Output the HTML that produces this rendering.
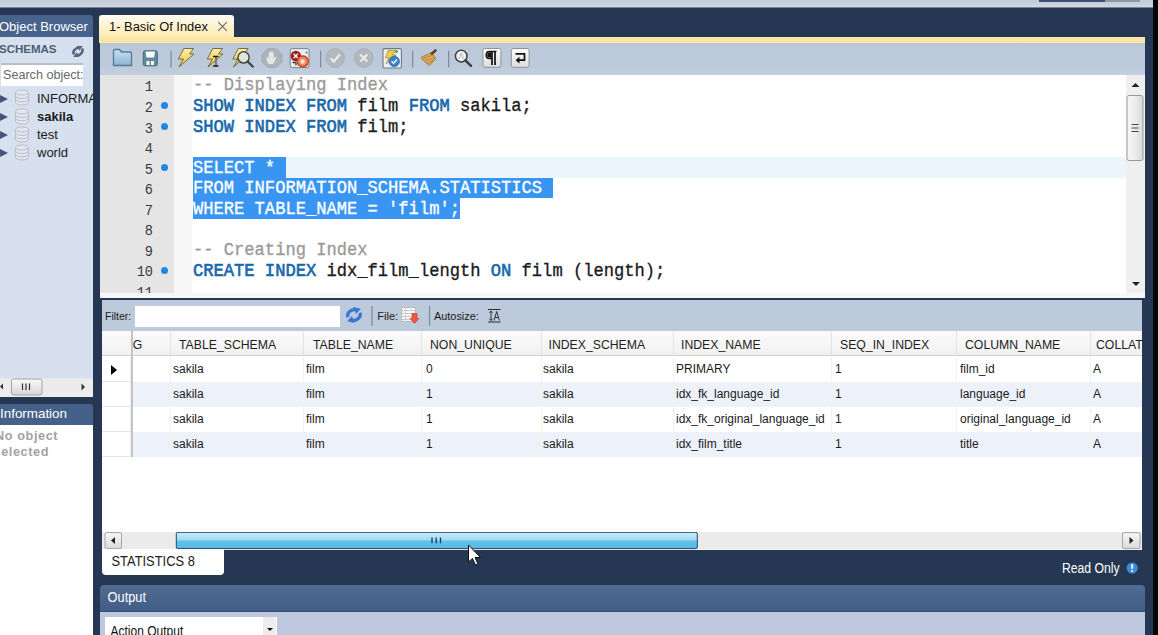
<!DOCTYPE html>
<html><head><meta charset="utf-8">
<style>
*{margin:0;padding:0;box-sizing:border-box}
html,body{width:1158px;height:635px;overflow:hidden}
body{position:relative;background:#253752;font-family:"Liberation Sans",sans-serif;color:#000}
.a{position:absolute}
.mono{font-family:"Liberation Mono",monospace}
.t{position:absolute;white-space:nowrap}
#top{left:0;top:0;width:1153px;height:8px;background:linear-gradient(#c2cbd8,#c8d0dc 60%,#d3dae5);border-bottom:1px solid #75839a}
#blk{left:1153px;top:0;width:5px;height:635px;background:#050608}
#obh{left:0;top:15px;width:93px;height:22px;background:#47638c;border-radius:0 3px 0 0;overflow:hidden}
#obb{left:0;top:37px;width:93px;height:341px;background:#d6e0ee;overflow:hidden}
#obsb{left:0;top:377.6px;width:93px;height:19px;background:#ececec;border-top:1px solid #e2e6ee}
#infh{left:0;top:404px;width:93px;height:21px;background:#45618a;border-radius:0 3px 0 0;overflow:hidden}
#infb{left:0;top:425px;width:93px;height:210px;background:#fff;overflow:hidden}
#tab{left:99px;top:15px;width:135px;height:23px;border-radius:3px 3px 0 0;background:linear-gradient(#fefcf4,#fdf0c8 60%,#fde9b0)}
#ystrip{left:99px;top:37px;width:1046px;height:6px;background:#fde5a6}
#tbar{left:100px;top:43px;width:1045px;height:32px;background:linear-gradient(#bac8da,#bccadb 75%,#c4cfdf)}
#ed{left:100px;top:75px;width:1045px;height:222.5px;background:#f7f7f7;overflow:hidden}
#edc{left:0;top:0;width:1026px;height:218px;background:#fff;overflow:hidden}
#gut{left:0;top:0;width:73.5px;height:218px;background:#e5e5e5}
#fold{left:73.5px;top:0;width:18px;height:218px;background:#f7f7f7}
.ln{position:absolute;left:0;width:52px;text-align:right;font-size:13.6px;color:#383838;line-height:20.45px;transform:scaleY(1.1);transform-origin:0 55%}
.dot{position:absolute;left:61px;width:7px;height:7px;border-radius:50%;background:#1e88e5}
.code{position:absolute;left:93px;font-size:17.13px;white-space:pre;color:#1a1a1a;line-height:20.45px;height:20.45px;transform:scaleY(1.1);transform-origin:0 72%;-webkit-text-stroke:0.3px currentColor}
.w{color:#fff}
.kw{color:#1868ac;-webkit-text-stroke:0.6px #1868ac}
.cm{color:#9a9a9a}
#vsb{left:1025.5px;top:0;width:19px;height:218px;background:#efefef}
#ftb{left:102px;top:300px;width:1040px;height:31px;background:#bccadb}
#grid{left:102px;top:331px;width:1040px;height:201px;background:#fff;overflow:hidden;font-size:12px}
#hsb{left:102px;top:532px;width:1040px;height:17.5px;background:#ebebeb;border-bottom:1px solid #f4f4f4}
#stat{left:102px;top:549px;width:122px;height:26px;background:#fff;border-radius:0 0 4px 4px}
#outh{left:100px;top:585px;width:1045px;height:27px;background:linear-gradient(#516b92,#46618a 70%,#425c84);border-radius:4px 4px 0 0;border-bottom:1px solid #3a5276}
#outb{left:100px;top:612px;width:1045px;height:23px;background:#bdc8df}
#dd{left:105px;top:617px;width:172px;height:20px;background:#fff}
</style></head><body>
<div id="top" class="a"></div>
<div class="a" style="left:1039px;top:0;width:66px;height:1.5px;background:#3a5070"></div><div class="a" style="left:1105px;top:0;width:35px;height:1.5px;background:#8c98a8"></div>
<div id="blk" class="a"></div>
<div id="obh" class="a"><div class="t" style="left:-1px;top:4.50px;font-size:13px;line-height:13px;color:#fff;font-weight:normal;">Object Browser</div></div>
<div id="obb" class="a"><div class="t" style="left:-1px;top:6.87px;font-size:11.5px;line-height:11.5px;color:#4d5d74;font-weight:bold;">SCHEMAS</div>
<svg class="a" style="left:70px;top:9px" width="16" height="12" viewBox="70 46 16 12"><g transform="rotate(-30 78 51.5)"><path d="M73.2 52 A5 3.6 0 0 1 81 48.6" stroke="#56667c" stroke-width="2.6" fill="none"/><path d="M79.5 46 L84.8 49.2 L79.6 51.6 Z" fill="#56667c"/><path d="M82.8 51 A5 3.6 0 0 1 75 54.4" stroke="#56667c" stroke-width="2.6" fill="none"/><path d="M76.5 57 L71.2 53.8 L76.4 51.4 Z" fill="#56667c"/></g></svg>
<div class="a" style="left:1px;top:26px;width:82px;height:23px;background:#fff;border-top:2px solid #b7bec8"></div>
<div class="t" style="left:3px;top:31.53px;font-size:12.6px;line-height:12.6px;color:#686868;font-weight:normal;transform:scaleY(1.05);transform-origin:0 84.65%;width:79.5px;overflow:hidden">Search object:</div>
<div class="a" style="left:-0.5px;top:57.6px;width:0;height:0;border-left:8px solid #44547a;border-top:4.7px solid transparent;border-bottom:4.7px solid transparent"></div>
<svg class="a" style="left:14px;top:52.3px" width="16" height="17" viewBox="0 0 16 17"><path d="M1.5 3.5 V13.5 A6.5 2.5 0 0 0 14.5 13.5 V3.5 A6.5 2.5 0 0 0 1.5 3.5 Z" fill="#e2e7ef"/><g fill="none" stroke="#b9bfca" stroke-width="1"><ellipse cx="8" cy="3.5" rx="6.5" ry="2.5"/><path d="M1.5 3.5 V13.5 A6.5 2.5 0 0 0 14.5 13.5 V3.5"/><path d="M1.5 7 A6.5 2.5 0 0 0 14.5 7"/><path d="M1.5 10.3 A6.5 2.5 0 0 0 14.5 10.3"/></g></svg>
<div class="t" style="left:37px;top:54.50px;font-size:13px;line-height:13px;color:#1a1a1a;font-weight:normal;">INFORMATION_SCHEMA</div>
<div class="a" style="left:-0.5px;top:75.8px;width:0;height:0;border-left:8px solid #44547a;border-top:4.7px solid transparent;border-bottom:4.7px solid transparent"></div>
<svg class="a" style="left:14px;top:70.5px" width="16" height="17" viewBox="0 0 16 17"><path d="M1.5 3.5 V13.5 A6.5 2.5 0 0 0 14.5 13.5 V3.5 A6.5 2.5 0 0 0 1.5 3.5 Z" fill="#e2e7ef"/><g fill="none" stroke="#b9bfca" stroke-width="1"><ellipse cx="8" cy="3.5" rx="6.5" ry="2.5"/><path d="M1.5 3.5 V13.5 A6.5 2.5 0 0 0 14.5 13.5 V3.5"/><path d="M1.5 7 A6.5 2.5 0 0 0 14.5 7"/><path d="M1.5 10.3 A6.5 2.5 0 0 0 14.5 10.3"/></g></svg>
<div class="t" style="left:37px;top:72.70px;font-size:13px;line-height:13px;color:#1a1a1a;font-weight:bold;">sakila</div>
<div class="a" style="left:-0.5px;top:94.0px;width:0;height:0;border-left:8px solid #44547a;border-top:4.7px solid transparent;border-bottom:4.7px solid transparent"></div>
<svg class="a" style="left:14px;top:88.7px" width="16" height="17" viewBox="0 0 16 17"><path d="M1.5 3.5 V13.5 A6.5 2.5 0 0 0 14.5 13.5 V3.5 A6.5 2.5 0 0 0 1.5 3.5 Z" fill="#e2e7ef"/><g fill="none" stroke="#b9bfca" stroke-width="1"><ellipse cx="8" cy="3.5" rx="6.5" ry="2.5"/><path d="M1.5 3.5 V13.5 A6.5 2.5 0 0 0 14.5 13.5 V3.5"/><path d="M1.5 7 A6.5 2.5 0 0 0 14.5 7"/><path d="M1.5 10.3 A6.5 2.5 0 0 0 14.5 10.3"/></g></svg>
<div class="t" style="left:37px;top:90.90px;font-size:13px;line-height:13px;color:#1a1a1a;font-weight:normal;">test</div>
<div class="a" style="left:-0.5px;top:112.2px;width:0;height:0;border-left:8px solid #44547a;border-top:4.7px solid transparent;border-bottom:4.7px solid transparent"></div>
<svg class="a" style="left:14px;top:106.9px" width="16" height="17" viewBox="0 0 16 17"><path d="M1.5 3.5 V13.5 A6.5 2.5 0 0 0 14.5 13.5 V3.5 A6.5 2.5 0 0 0 1.5 3.5 Z" fill="#e2e7ef"/><g fill="none" stroke="#b9bfca" stroke-width="1"><ellipse cx="8" cy="3.5" rx="6.5" ry="2.5"/><path d="M1.5 3.5 V13.5 A6.5 2.5 0 0 0 14.5 13.5 V3.5"/><path d="M1.5 7 A6.5 2.5 0 0 0 14.5 7"/><path d="M1.5 10.3 A6.5 2.5 0 0 0 14.5 10.3"/></g></svg>
<div class="t" style="left:37px;top:109.10px;font-size:13px;line-height:13px;color:#1a1a1a;font-weight:normal;">world</div></div>
<div id="obsb" class="a"></div>
<svg class="a" style="left:0;top:377px" width="93" height="20" viewBox="0 377 93 20"><defs><linearGradient id="lth" x1="0" y1="0" x2="0" y2="1"><stop offset="0" stop-color="#fafafa"/><stop offset="1" stop-color="#d6d6d6"/></linearGradient></defs><path d="M3 383.5 L0 386.5 L3 389.5 Z" fill="#333"/><rect x="11.5" y="379" width="30.5" height="16" rx="2" fill="url(#lth)" stroke="#a3a3a3" stroke-width="1"/><path d="M22.5 383.5 V390 M26 383.5 V390 M29.5 383.5 V390" stroke="#333" stroke-width="1.2"/><path d="M81.5 383.5 L85 387 L81.5 390.5 Z" fill="#333"/></svg>
<div id="infh" class="a"><div class="t" style="left:0px;top:3.46px;font-size:13.4px;line-height:13.4px;color:#fff;font-weight:normal;">Information</div></div>
<div id="infb" class="a"><div class="t" style="left:-5px;top:5.25px;font-size:12.7px;line-height:12.7px;color:#a2a2a8;font-weight:bold;transform:scaleY(1.06);transform-origin:0 84.65%;letter-spacing:0.6px">No object</div><div class="t" style="left:-6.5px;top:20.75px;font-size:12.7px;line-height:12.7px;color:#a2a2a8;font-weight:bold;transform:scaleY(1.06);transform-origin:0 84.65%;letter-spacing:0.6px">selected</div></div>
<div id="tab" class="a"><div class="t" style="left:10px;top:6.08px;font-size:12.9px;line-height:12.9px;color:#111;font-weight:normal;transform:scaleY(1.06);transform-origin:0 84.65%;">1- Basic Of Index</div></div>
<svg class="a" style="left:217px;top:21px" width="11" height="11" viewBox="0 0 11 11"><path d="M1.2 1.2 L9.8 9.8 M9.8 1.2 L1.2 9.8" stroke="#6a6a6a" stroke-width="1.2"/></svg>
<div id="ystrip" class="a"></div>
<div id="tbar" class="a"></div>
<svg class="a" style="left:100px;top:43px" width="1045" height="32" viewBox="100 43 1045 32"><defs><linearGradient id="fg" x1="0" y1="0" x2="0" y2="1"><stop offset="0" stop-color="#c4e2f4"/><stop offset="1" stop-color="#8db4d2"/></linearGradient><linearGradient id="yg" x1="0" y1="0" x2="0" y2="1"><stop offset="0" stop-color="#fbeeb0"/><stop offset="1" stop-color="#e8c33c"/></linearGradient><linearGradient id="bg2" x1="0" y1="0" x2="0" y2="1"><stop offset="0" stop-color="#fdfdfd"/><stop offset="1" stop-color="#dcdcdc"/></linearGradient></defs><path d="M113.5 65.5 V50.5 Q113.5 49.5 114.5 49.5 H119.5 L121.5 52 H130.5 Q131.5 52 131.5 53 V65.5 Z" fill="url(#fg)" stroke="#587a92" stroke-width="1.3"/><rect x="143.3" y="50.8" width="14" height="15" rx="1.5" fill="#5f8aa0" stroke="#466b80" stroke-width="1"/><path d="M145.5 51.5 H155 L154 57.5 H146.5 Z" fill="#fff"/><rect x="146.5" y="61" width="3" height="4" fill="#fff"/><rect x="151" y="61" width="3" height="4" fill="#fff"/><rect x="170.4" y="50.7" width="1.3" height="16.8" fill="#7f8ea3"/><rect x="320.0" y="50.7" width="1.3" height="16.8" fill="#7f8ea3"/><rect x="412.0" y="50.7" width="1.3" height="16.8" fill="#7f8ea3"/><rect x="448.0" y="50.7" width="1.3" height="16.8" fill="#7f8ea3"/><path d="M183.8 48.5 H193.5 L189.5 54 H194 L179 67 L183.5 59 H178.3 Z" fill="url(#yg)" stroke="#6f6226" stroke-width="0.9" stroke-linejoin="round"/><g transform="translate(29 0)"><path d="M183.8 48.5 H193.5 L189.5 54 H194 L179 67 L183.5 59 H178.3 Z" fill="url(#yg)" stroke="#6f6226" stroke-width="0.9" stroke-linejoin="round"/></g><path d="M213 56.5 H218.5 M215.8 56.5 V66 M213 66 H218.5" stroke="#222" stroke-width="1.6" fill="none"/><path d="M215.8 57.5 V65" stroke="#eee" stroke-width="0.6"/><g transform="translate(54.5 0)"><path d="M183.8 48.5 H193.5 L189.5 54 H194 L179 67 L183.5 59 H178.3 Z" fill="url(#yg)" stroke="#6f6226" stroke-width="0.9" stroke-linejoin="round"/></g><circle cx="243.6" cy="57.4" r="5.6" fill="#dfe6dc" stroke="#4a4a44" stroke-width="1.5"/><path d="M247.6 61.5 L252.8 66.5" stroke="#3c4a44" stroke-width="2.4" stroke-linecap="round"/><path d="M268 48.5 H276 L282 54.5 V62 L276 67.5 H268 L262 62 V54.5 Z" fill="#aeb3ba" stroke="#9ea3aa" stroke-width="0.8"/><path d="M268.5 64 Q266 60 266.5 57 L267.5 56.8 L268.8 59 V52.5 H270 V57 V51.5 H271.3 V57 V51.8 H272.6 V57 V52.8 H273.8 V58.5 L275.5 56.5 L276.5 57.3 Q274.5 62 273 64 Z" fill="#e4e6ea"/><rect x="290.2" y="48.6" width="18.8" height="19" rx="2" fill="#e9ebee" stroke="#7d8590" stroke-width="1"/><circle cx="295.8" cy="56" r="5.2" fill="#9a1c22"/><path d="M293.6 53.8 L298 58.2 M298 53.8 L293.6 58.2" stroke="#fff" stroke-width="1.4"/><circle cx="302.8" cy="61.4" r="5.4" fill="#f4875a" stroke="#c73a16" stroke-width="1.3"/><circle cx="302.6" cy="61.6" r="2.3" fill="#fde2d0"/><path d="M292.5 62.5 H296 V65.5" stroke="#3a3a3a" stroke-width="1.3" fill="none"/><circle cx="306.5" cy="52.5" r="1" fill="#3aa04a"/><circle cx="335.2" cy="58" r="9.3" fill="#b3b8be" stroke="#a4a9b0" stroke-width="0.8"/><path d="M330.8 58.3 L333.8 61.5 L339.8 54.5" stroke="#e9ebee" stroke-width="2.4" fill="none"/><circle cx="363.8" cy="58" r="9.3" fill="#b3b8be" stroke="#a4a9b0" stroke-width="0.8"/><path d="M360.3 54.5 L367.3 61.5 M367.3 54.5 L360.3 61.5" stroke="#e9ebee" stroke-width="2.4"/><rect x="383" y="48.6" width="18.4" height="19.4" rx="1.5" fill="#eef0f2" stroke="#6f7680" stroke-width="1.1"/><path d="M388 50.5 L396 50.5 L392.5 55 L396 55 L386 64 L389 58 L385.5 58 Z" fill="#f0cd45" stroke="#8a7426" stroke-width="0.6"/><circle cx="396.5" cy="51.5" r="1.5" fill="#5aa63c"/><circle cx="394.2" cy="61.4" r="5.2" fill="#3b82d0" stroke="#2a5fa8" stroke-width="0.8"/><path d="M391.6 61.3 L393.6 63.3 L397 59.5" stroke="#fff" stroke-width="1.3" fill="none"/><path d="M421 57.5 L431.5 52.5 L436 58.5 L429.5 65.5 Q425 63 421 57.5 Z" fill="#d9a85a" stroke="#9c6e2c" stroke-width="0.8"/><path d="M423.5 58.5 L432.5 55 M425.5 61 L434 57.5 M427.5 63.5 L435 59.5" stroke="#a87930" stroke-width="0.7"/><path d="M432 53.5 L435.5 50.5" stroke="#5a4020" stroke-width="2.6" stroke-linecap="round"/><circle cx="461.2" cy="56.1" r="5.8" fill="#eef0f2" stroke="#3e3e3e" stroke-width="1.5"/><path d="M459 59 L461.2 53.2 L463.4 59" stroke="#aaa" stroke-width="0.8" fill="none"/><path d="M465.4 60.3 L471 65.8" stroke="#3b3b3b" stroke-width="2.4" stroke-linecap="round"/><rect x="482.9" y="48.5" width="18" height="18.8" rx="2" fill="url(#bg2)" stroke="#8e9399" stroke-width="1"/><path d="M495 51.5 V65 M492 51.5 V65 M496.5 51.5 H489.5 Q486.3 51.5 486.3 55 Q486.3 58.5 489.5 58.5 H492" stroke="#111" stroke-width="1.7" fill="none"/><path d="M489.5 52.3 Q487.2 52.5 487.2 55 Q487.2 57.8 491.2 57.8 V52.3 Z" fill="#111"/><rect x="511.3" y="48.5" width="17.8" height="18.8" rx="2" fill="url(#bg2)" stroke="#8e9399" stroke-width="1"/><path d="M515.5 53.8 H524.5 V60.2 H518.5" stroke="#111" stroke-width="1.7" fill="none"/><path d="M515.5 60.2 L519.5 56.8 V63.6 Z" fill="#111"/></svg>
<div id="ed" class="a"><div id="edc" class="a">
<div id="gut" class="a"></div><div id="fold" class="a"></div>
<div class="a" style="left:93px;top:82.40px;width:933px;height:20.45px;background:#eaf6fc"></div>
<div class="a" style="left:93px;top:82.40px;width:92.5px;height:20.65px;background:#3995f2"></div>
<div class="a" style="left:93px;top:102.85px;width:359.8px;height:20.65px;background:#3995f2"></div>
<div class="a" style="left:93px;top:123.30px;width:267.3px;height:20.65px;background:#3995f2"></div>
<div class="ln mono" style="top:3.39px;left:1px">1</div>
<div class="code mono" style="top:1.49px"><span class="cm">-- Displaying Index</span></div>
<div class="ln mono" style="top:23.95px;left:1px">2</div>
<div class="dot" style="top:27.05px"></div>
<div class="code mono" style="top:22.05px"><span class="kw">SHOW INDEX FROM</span> film <span class="kw">FROM</span> sakila;</div>
<div class="ln mono" style="top:44.51px;left:1px">3</div>
<div class="dot" style="top:47.61px"></div>
<div class="code mono" style="top:42.61px"><span class="kw">SHOW INDEX FROM</span> film;</div>
<div class="ln mono" style="top:65.07px;left:1px">4</div>
<div class="ln mono" style="top:85.63px;left:1px">5</div>
<div class="dot" style="top:88.73px"></div>
<div class="code mono" style="top:83.73px"><span class="w">SELECT *</span></div>
<div class="ln mono" style="top:106.19px;left:1px">6</div>
<div class="code mono" style="top:104.29px"><span class="w">FROM INFORMATION_SCHEMA.STATISTICS</span></div>
<div class="ln mono" style="top:126.75px;left:1px">7</div>
<div class="code mono" style="top:124.85px"><span class="w">WHERE TABLE_NAME = 'film';</span></div>
<div class="ln mono" style="top:147.31px;left:1px">8</div>
<div class="ln mono" style="top:167.87px;left:1px">9</div>
<div class="code mono" style="top:165.97px"><span class="cm">-- Creating Index</span></div>
<div class="ln mono" style="top:188.43px;left:1px">10</div>
<div class="dot" style="top:191.53px"></div>
<div class="code mono" style="top:186.53px"><span class="kw">CREATE INDEX</span> idx_film_length <span class="kw">ON</span> film (length);</div>
<div class="ln mono" style="top:208.99px;left:1px">11</div>
</div>
<div id="vsb" class="a"></div>
<svg class="a" style="left:1025px;top:0" width="20" height="222" viewBox="1125 75 20 222"><defs><linearGradient id="vth" x1="0" y1="0" x2="1" y2="0"><stop offset="0" stop-color="#f6f6f6"/><stop offset="0.5" stop-color="#ececec"/><stop offset="1" stop-color="#d8d8d8"/></linearGradient></defs><path d="M1131.5 87 L1135.5 83 L1139.5 87 Z" fill="#222"/><rect x="1127" y="95.5" width="16" height="65" rx="2" fill="url(#vth)" stroke="#9a9a9a" stroke-width="1"/><path d="M1131.5 124.5 H1138.5 M1131.5 128 H1138.5 M1131.5 131.5 H1138.5" stroke="#444" stroke-width="1.2"/><path d="M1132 282 L1140 282 L1136 286 Z" fill="#222"/></svg></div>
<div id="ftb" class="a"></div>
<div class="t" style="left:105px;top:311.11px;font-size:10.5px;line-height:10.5px;color:#1a1a1a;font-weight:normal;">Filter:</div>
<div class="a" style="left:135px;top:304.5px;width:204.5px;height:22.5px;background:#fff;border-top:1px solid #c8cdd4"></div>
<div class="t" style="left:377.3px;top:310.69px;font-size:11px;line-height:11px;color:#1a1a1a;font-weight:normal;">File:</div>
<div class="t" style="left:434px;top:310.77px;font-size:10.9px;line-height:10.9px;color:#1a1a1a;font-weight:normal;">Autosize:</div>
<svg class="a" style="left:340px;top:300px" width="170" height="32" viewBox="340 300 170 32"><g transform="rotate(-20 354 315)"><path d="M347.5 315 A6.5 5.2 0 0 1 358.5 311.2" stroke="#3a78d4" stroke-width="3.2" fill="none"/><path d="M356 307.2 L362.5 311.5 L356.3 314.8 Z" fill="#3a78d4"/><path d="M360.5 315 A6.5 5.2 0 0 1 349.5 318.8" stroke="#3a78d4" stroke-width="3.2" fill="none"/><path d="M352 322.8 L345.5 318.5 L351.7 315.2 Z" fill="#3a78d4"/></g><rect x="371.4" y="306" width="1.3" height="19.7" fill="#7f8ea3"/><rect x="428.9" y="306" width="1.3" height="19.7" fill="#7f8ea3"/><rect x="401.5" y="307.5" width="14" height="14" fill="#f6f6f6" stroke="#b0b0b0" stroke-width="0.8"/><path d="M401.5 310.5 H415.5" stroke="#c4c4c4" stroke-width="0.9"/><path d="M401.5 313.5 H415.5" stroke="#c4c4c4" stroke-width="0.9"/><path d="M401.5 316.5 H415.5" stroke="#c4c4c4" stroke-width="0.9"/><path d="M401.5 319.5 H415.5" stroke="#c4c4c4" stroke-width="0.9"/><path d="M405.5 307.5 V321.5" stroke="#c9c9c9" stroke-width="0.8"/><path d="M412 313.5 H417 V318.5 H419 L414.5 323.5 L410 318.5 H412 Z" fill="#ec5a44" stroke="#c23a24" stroke-width="0.6"/><path d="M488 309.5 H500.5 M488 322 H500.5" stroke="#2a2a2a" stroke-width="1"/><path d="M491 311 V320.5 M489.5 312.8 L491 311 L492.5 312.8 M489.5 318.7 L491 320.5 L492.5 318.7" stroke="#333" stroke-width="1" fill="none"/><path d="M494 320.5 L496.7 311.5 L499.4 320.5 M495 317.5 H498.4" stroke="#333" stroke-width="1" fill="none"/></svg>
<div id="grid" class="a"><div class="a" style="left:0;top:0;width:1040px;height:25px;background:linear-gradient(#fbfbfb,#f1f1f1);border-bottom:1px solid #cfcfcf"></div>
<div class="a" style="left:30px;top:26px;width:1010px;height:25px;background:#fff"></div>
<div class="a" style="left:0;top:26px;width:29px;height:25px;background:#fff;border-bottom:1px solid #e4e4e4;border-right:1px solid #ececec"></div>
<div class="a" style="left:30px;top:51px;width:1010px;height:25px;background:#edf2fa"></div>
<div class="a" style="left:0;top:51px;width:29px;height:25px;background:#fff;border-bottom:1px solid #e4e4e4;border-right:1px solid #ececec"></div>
<div class="a" style="left:30px;top:76px;width:1010px;height:25px;background:#fff"></div>
<div class="a" style="left:0;top:76px;width:29px;height:25px;background:#fff;border-bottom:1px solid #e4e4e4;border-right:1px solid #ececec"></div>
<div class="a" style="left:30px;top:101px;width:1010px;height:25px;background:#edf2fa"></div>
<div class="a" style="left:0;top:101px;width:29px;height:25px;background:#fff;border-bottom:1px solid #e4e4e4;border-right:1px solid #ececec"></div>
<div class="a" style="left:29px;top:0;width:2px;height:126px;background:#c4c4c4"></div>
<div class="a" style="left:67.6px;top:0;width:1px;height:25px;background:#e3e3e3"></div>
<div class="a" style="left:67.6px;top:26px;width:1px;height:100px;background:#f2f2f2"></div>
<div class="a" style="left:200.5px;top:0;width:1px;height:25px;background:#e3e3e3"></div>
<div class="a" style="left:200.5px;top:26px;width:1px;height:100px;background:#f2f2f2"></div>
<div class="a" style="left:319.0px;top:0;width:1px;height:25px;background:#e3e3e3"></div>
<div class="a" style="left:319.0px;top:26px;width:1px;height:100px;background:#f2f2f2"></div>
<div class="a" style="left:439.0px;top:0;width:1px;height:25px;background:#e3e3e3"></div>
<div class="a" style="left:439.0px;top:26px;width:1px;height:100px;background:#f2f2f2"></div>
<div class="a" style="left:571.0px;top:0;width:1px;height:25px;background:#e3e3e3"></div>
<div class="a" style="left:571.0px;top:26px;width:1px;height:100px;background:#f2f2f2"></div>
<div class="a" style="left:729.0px;top:0;width:1px;height:25px;background:#e3e3e3"></div>
<div class="a" style="left:729.0px;top:26px;width:1px;height:100px;background:#f2f2f2"></div>
<div class="a" style="left:854.0px;top:0;width:1px;height:25px;background:#e3e3e3"></div>
<div class="a" style="left:854.0px;top:26px;width:1px;height:100px;background:#f2f2f2"></div>
<div class="a" style="left:987.5px;top:0;width:1px;height:25px;background:#e3e3e3"></div>
<div class="a" style="left:987.5px;top:26px;width:1px;height:100px;background:#f2f2f2"></div>
<div class="t" style="left:30.80000000000001px;top:7.93px;font-size:12.25px;line-height:12.25px;color:#1e1e1e;font-weight:normal;">G</div>
<div class="t" style="left:77px;top:7.93px;font-size:12.25px;line-height:12.25px;color:#1e1e1e;font-weight:normal;">TABLE_SCHEMA</div>
<div class="t" style="left:211px;top:7.93px;font-size:12.25px;line-height:12.25px;color:#1e1e1e;font-weight:normal;">TABLE_NAME</div>
<div class="t" style="left:328px;top:7.93px;font-size:12.25px;line-height:12.25px;color:#1e1e1e;font-weight:normal;">NON_UNIQUE</div>
<div class="t" style="left:446.5px;top:7.93px;font-size:12.25px;line-height:12.25px;color:#1e1e1e;font-weight:normal;">INDEX_SCHEMA</div>
<div class="t" style="left:579px;top:7.93px;font-size:12.25px;line-height:12.25px;color:#1e1e1e;font-weight:normal;">INDEX_NAME</div>
<div class="t" style="left:738px;top:7.93px;font-size:12.25px;line-height:12.25px;color:#1e1e1e;font-weight:normal;">SEQ_IN_INDEX</div>
<div class="t" style="left:863px;top:7.93px;font-size:12.25px;line-height:12.25px;color:#1e1e1e;font-weight:normal;">COLUMN_NAME</div>
<div class="t" style="left:994px;top:7.93px;font-size:12.25px;line-height:12.25px;color:#1e1e1e;font-weight:normal;">COLLATION</div>
<div class="t" style="left:71px;top:32.34px;font-size:12.0px;line-height:12.0px;color:#1a1a1a;font-weight:normal;transform:scaleY(1.06);transform-origin:0 84.65%;">sakila</div>
<div class="t" style="left:204px;top:32.34px;font-size:12.0px;line-height:12.0px;color:#1a1a1a;font-weight:normal;transform:scaleY(1.06);transform-origin:0 84.65%;">film</div>
<div class="t" style="left:324px;top:32.34px;font-size:12.0px;line-height:12.0px;color:#1a1a1a;font-weight:normal;transform:scaleY(1.06);transform-origin:0 84.65%;">0</div>
<div class="t" style="left:441px;top:32.34px;font-size:12.0px;line-height:12.0px;color:#1a1a1a;font-weight:normal;transform:scaleY(1.06);transform-origin:0 84.65%;">sakila</div>
<div class="t" style="left:574px;top:32.34px;font-size:12.0px;line-height:12.0px;color:#1a1a1a;font-weight:normal;transform:scaleY(1.06);transform-origin:0 84.65%;">PRIMARY</div>
<div class="t" style="left:733px;top:32.34px;font-size:12.0px;line-height:12.0px;color:#1a1a1a;font-weight:normal;transform:scaleY(1.06);transform-origin:0 84.65%;">1</div>
<div class="t" style="left:858px;top:32.34px;font-size:12.0px;line-height:12.0px;color:#1a1a1a;font-weight:normal;transform:scaleY(1.06);transform-origin:0 84.65%;">film_id</div>
<div class="t" style="left:991px;top:32.34px;font-size:12.0px;line-height:12.0px;color:#1a1a1a;font-weight:normal;transform:scaleY(1.06);transform-origin:0 84.65%;">A</div>
<div class="t" style="left:71px;top:57.34px;font-size:12.0px;line-height:12.0px;color:#1a1a1a;font-weight:normal;transform:scaleY(1.06);transform-origin:0 84.65%;">sakila</div>
<div class="t" style="left:204px;top:57.34px;font-size:12.0px;line-height:12.0px;color:#1a1a1a;font-weight:normal;transform:scaleY(1.06);transform-origin:0 84.65%;">film</div>
<div class="t" style="left:324px;top:57.34px;font-size:12.0px;line-height:12.0px;color:#1a1a1a;font-weight:normal;transform:scaleY(1.06);transform-origin:0 84.65%;">1</div>
<div class="t" style="left:441px;top:57.34px;font-size:12.0px;line-height:12.0px;color:#1a1a1a;font-weight:normal;transform:scaleY(1.06);transform-origin:0 84.65%;">sakila</div>
<div class="t" style="left:574px;top:57.34px;font-size:12.0px;line-height:12.0px;color:#1a1a1a;font-weight:normal;transform:scaleY(1.06);transform-origin:0 84.65%;">idx_fk_language_id</div>
<div class="t" style="left:733px;top:57.34px;font-size:12.0px;line-height:12.0px;color:#1a1a1a;font-weight:normal;transform:scaleY(1.06);transform-origin:0 84.65%;">1</div>
<div class="t" style="left:858px;top:57.34px;font-size:12.0px;line-height:12.0px;color:#1a1a1a;font-weight:normal;transform:scaleY(1.06);transform-origin:0 84.65%;">language_id</div>
<div class="t" style="left:991px;top:57.34px;font-size:12.0px;line-height:12.0px;color:#1a1a1a;font-weight:normal;transform:scaleY(1.06);transform-origin:0 84.65%;">A</div>
<div class="t" style="left:71px;top:82.34px;font-size:12.0px;line-height:12.0px;color:#1a1a1a;font-weight:normal;transform:scaleY(1.06);transform-origin:0 84.65%;">sakila</div>
<div class="t" style="left:204px;top:82.34px;font-size:12.0px;line-height:12.0px;color:#1a1a1a;font-weight:normal;transform:scaleY(1.06);transform-origin:0 84.65%;">film</div>
<div class="t" style="left:324px;top:82.34px;font-size:12.0px;line-height:12.0px;color:#1a1a1a;font-weight:normal;transform:scaleY(1.06);transform-origin:0 84.65%;">1</div>
<div class="t" style="left:441px;top:82.34px;font-size:12.0px;line-height:12.0px;color:#1a1a1a;font-weight:normal;transform:scaleY(1.06);transform-origin:0 84.65%;">sakila</div>
<div class="t" style="left:574px;top:82.34px;font-size:12.0px;line-height:12.0px;color:#1a1a1a;font-weight:normal;transform:scaleY(1.06);transform-origin:0 84.65%;">idx_fk_original_language_id</div>
<div class="t" style="left:733px;top:82.34px;font-size:12.0px;line-height:12.0px;color:#1a1a1a;font-weight:normal;transform:scaleY(1.06);transform-origin:0 84.65%;">1</div>
<div class="t" style="left:858px;top:82.34px;font-size:12.0px;line-height:12.0px;color:#1a1a1a;font-weight:normal;transform:scaleY(1.06);transform-origin:0 84.65%;">original_language_id</div>
<div class="t" style="left:991px;top:82.34px;font-size:12.0px;line-height:12.0px;color:#1a1a1a;font-weight:normal;transform:scaleY(1.06);transform-origin:0 84.65%;">A</div>
<div class="t" style="left:71px;top:107.34px;font-size:12.0px;line-height:12.0px;color:#1a1a1a;font-weight:normal;transform:scaleY(1.06);transform-origin:0 84.65%;">sakila</div>
<div class="t" style="left:204px;top:107.34px;font-size:12.0px;line-height:12.0px;color:#1a1a1a;font-weight:normal;transform:scaleY(1.06);transform-origin:0 84.65%;">film</div>
<div class="t" style="left:324px;top:107.34px;font-size:12.0px;line-height:12.0px;color:#1a1a1a;font-weight:normal;transform:scaleY(1.06);transform-origin:0 84.65%;">1</div>
<div class="t" style="left:441px;top:107.34px;font-size:12.0px;line-height:12.0px;color:#1a1a1a;font-weight:normal;transform:scaleY(1.06);transform-origin:0 84.65%;">sakila</div>
<div class="t" style="left:574px;top:107.34px;font-size:12.0px;line-height:12.0px;color:#1a1a1a;font-weight:normal;transform:scaleY(1.06);transform-origin:0 84.65%;">idx_film_title</div>
<div class="t" style="left:733px;top:107.34px;font-size:12.0px;line-height:12.0px;color:#1a1a1a;font-weight:normal;transform:scaleY(1.06);transform-origin:0 84.65%;">1</div>
<div class="t" style="left:858px;top:107.34px;font-size:12.0px;line-height:12.0px;color:#1a1a1a;font-weight:normal;transform:scaleY(1.06);transform-origin:0 84.65%;">title</div>
<div class="t" style="left:991px;top:107.34px;font-size:12.0px;line-height:12.0px;color:#1a1a1a;font-weight:normal;transform:scaleY(1.06);transform-origin:0 84.65%;">A</div>
<div class="a" style="left:8.6px;top:33.8px;width:0;height:0;border-left:6.5px solid #000;border-top:5.5px solid transparent;border-bottom:5.5px solid transparent"></div></div>
<div id="hsb" class="a"></div>
<svg class="a" style="left:102px;top:532px" width="1040" height="18" viewBox="102 532 1040 18"><defs><linearGradient id="hth" x1="0" y1="0" x2="0" y2="1"><stop offset="0" stop-color="#c6ecfb"/><stop offset="0.45" stop-color="#a3dcf5"/><stop offset="0.55" stop-color="#62c1ea"/><stop offset="1" stop-color="#58b9e6"/></linearGradient><linearGradient id="btn" x1="0" y1="0" x2="0" y2="1"><stop offset="0" stop-color="#f7f7f7"/><stop offset="1" stop-color="#dadada"/></linearGradient></defs><rect x="105" y="532.6" width="16.5" height="16" rx="1.5" fill="url(#btn)" stroke="#9c9c9c" stroke-width="0.9"/><path d="M115 537 L111 540.5 L115 544" fill="#222"/><rect x="1122.5" y="532.6" width="17.5" height="16" rx="1.5" fill="url(#btn)" stroke="#9c9c9c" stroke-width="0.9"/><path d="M1129.5 537 L1133.5 540.5 L1129.5 544 Z" fill="#222"/><rect x="176.3" y="532.3" width="521" height="16.3" rx="1.5" fill="url(#hth)" stroke="#1f4a68" stroke-width="1"/><path d="M432 537.5 V543.3 M436.2 537.5 V543.3 M440.5 537.5 V543.3" stroke="#1a3c58" stroke-width="1.3"/></svg>
<div id="stat" class="a"><div class="t" style="left:9.5px;top:7.08px;font-size:12.9px;line-height:12.9px;color:#222;font-weight:normal;transform:scaleY(1.1);transform-origin:0 84.65%;">STATISTICS 8</div></div>
<div class="t" style="left:1062px;top:563.17px;font-size:12.2px;line-height:12.2px;color:#fff;font-weight:normal;transform:scaleY(1.15);transform-origin:0 84.65%;">Read Only</div>
<svg class="a" style="left:1125px;top:561px" width="15" height="15" viewBox="1125 561 15 15"><circle cx="1132.2" cy="568" r="5.6" fill="#3d8ad8"/><path d="M1132.2 564.3 V568.8" stroke="#fff" stroke-width="1.8"/><circle cx="1132.2" cy="571" r="1" fill="#fff"/></svg>
<svg class="a" style="left:466px;top:543px" width="18" height="24" viewBox="466 543 18 24"><path d="M468.5 545 V562 L472.5 558.5 L475.5 565 L478 564 L475 557.5 L480.5 557.5 Z" fill="#fff" stroke="#111" stroke-width="1"/></svg>
<div id="outh" class="a"><div class="t" style="left:7.599999999999994px;top:6.76px;font-size:12.8px;line-height:12.8px;color:#fff;font-weight:normal;transform:scaleY(1.1);transform-origin:0 84.65%;">Output</div></div>
<div id="outb" class="a"></div>
<div id="dd" class="a"><div class="t" style="left:5.5px;top:8.64px;font-size:12px;line-height:12px;color:#111;font-weight:normal;transform:scaleY(1.2);transform-origin:0 84.65%;">Action Output</div><div class="a" style="left:158px;top:0;width:13px;height:20px;background:#ededed"></div><div class="a" style="left:161.5px;top:11px;width:0;height:0;border-top:3.5px solid #111;border-left:3px solid transparent;border-right:3px solid transparent"></div></div>
</body></html>
